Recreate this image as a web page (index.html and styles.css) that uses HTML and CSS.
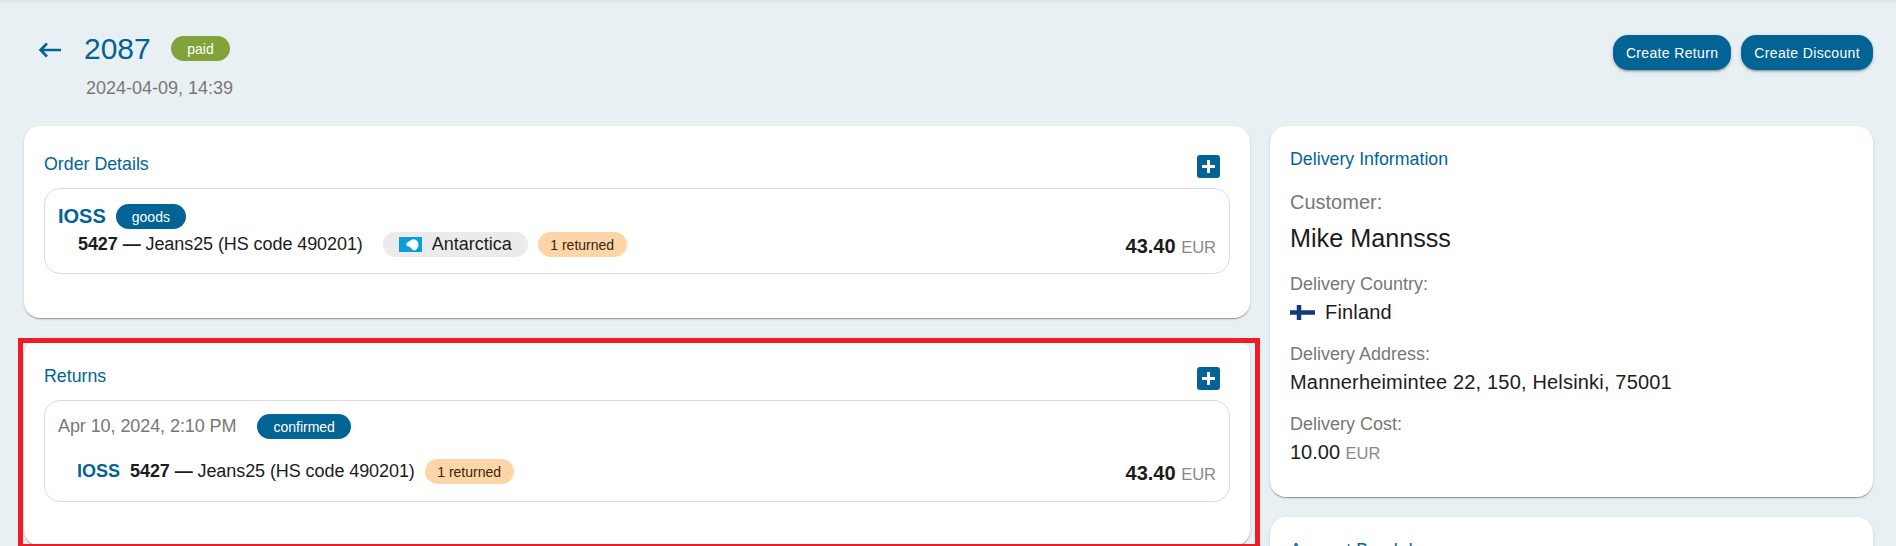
FILE: index.html
```html
<!DOCTYPE html>
<html lang="en">
<head>
<meta charset="utf-8">
<title>Order 2087</title>
<link rel="stylesheet" href="styles.css">
</head>
<body>
<div class="page">
  <header class="page-head">
    <div class="head-left">
      <div class="head-title">
        <svg class="back" width="23" height="16" viewBox="0 0 23 16"><path d="M23 8H2.500M9 1.500 2.500 8 9 14.500" fill="none" stroke="#026395" stroke-width="2.600"/></svg>
        <h1 class="order-no">2087</h1>
        <span class="chip chip-paid">paid</span>
      </div>
      <div class="order-date">2024-04-09, 14:39</div>
    </div>
    <div class="head-actions">
      <button class="btn">Create Return</button>
      <button class="btn">Create Discount</button>
    </div>
  </header>
  <div class="layout">
    <div class="col">
      <section class="card">
        <div class="card-head">
          <h2 class="card-title">Order Details</h2>
          <span class="plus"><svg width="13" height="13" viewBox="0 0 13 13"><path d="M6.500 0v13M0 6.500h13" stroke="#fff" stroke-width="3"/></svg></span>
        </div>
        <div class="item">
          <div class="item-main">
            <div class="item-top">
              <span class="scheme">IOSS</span>
              <span class="chip chip-blue">goods</span>
            </div>
            <div class="item-line">
              <span class="product"><b>5427 —</b> Jeans25 (HS code 490201)</span>
              <span class="chip chip-country">
                <svg class="flag-aq" width="23" height="15" viewBox="0 0 23 15"><rect width="23" height="15" fill="#0a9fdc"/><path d="M7.500 6.500C9 4.500 11 4 12.500 2.800 14.500 1.500 17 2.500 18.500 4.500 20 6.500 19.500 9 18.500 11 17.500 13 15.500 14 14 13 12.500 12 12 10.500 10.500 10 9 9.500 6.500 9 7.500 6.500Z" fill="#fff"/></svg>
                Antarctica
              </span>
              <span class="chip chip-returned">1 returned</span>
            </div>
          </div>
          <div class="amount"><b>43.40</b> <span class="currency">EUR</span></div>
        </div>
      </section>
      <section class="card card-returns">
        <div class="card-head">
          <h2 class="card-title">Returns</h2>
          <span class="plus"><svg width="13" height="13" viewBox="0 0 13 13"><path d="M6.500 0v13M0 6.500h13" stroke="#fff" stroke-width="3"/></svg></span>
        </div>
        <div class="item item-return">
          <div class="item-main">
            <div class="item-top">
              <span class="return-date">Apr 10, 2024, 2:10 PM</span>
              <span class="chip chip-blue">confirmed</span>
            </div>
            <div class="item-line item-line-return">
              <span class="scheme-small">IOSS</span>
              <span class="product"><b>5427 —</b> Jeans25 (HS code 490201)</span>
              <span class="chip chip-returned">1 returned</span>
            </div>
          </div>
          <div class="amount"><b>43.40</b> <span class="currency">EUR</span></div>
        </div>
        <div class="highlight"></div>
      </section>
    </div>
    <aside class="col">
      <section class="card card-info">
        <h2 class="card-title">Delivery Information</h2>
        <div class="label label-lg">Customer:</div>
        <div class="name">Mike Mannsss</div>
        <div class="label">Delivery Country:</div>
        <div class="value value-flag">
          <svg class="flag-fi" width="25" height="15" viewBox="0 0 25 15"><rect width="25" height="15" fill="#fff"/><path d="M0 7.500h25M9 0v15" stroke="#123a78" stroke-width="4.500"/></svg>
          Finland
        </div>
        <div class="label">Delivery Address:</div>
        <div class="value value-text">Mannerheimintee 22, 150, Helsinki, 75001</div>
        <div class="label">Delivery Cost:</div>
        <div class="value">10.00 <span class="currency">EUR</span></div>
      </section>
      <section class="card card-info">
        <h2 class="card-title">Amount Breakdown</h2>
      </section>
    </aside>
  </div>
</div>
</body>
</html>
```
FILE: styles.css
```css
* { box-sizing: border-box; }
html, body { margin: 0; height: 100%; overflow: hidden; }
body {
  background: #e9f0f4;
  font-family: "Liberation Sans", Arial, sans-serif;
  color: #1c1c1c;
}
.page {
  height: 546px;
  overflow: hidden;
  box-shadow: inset 0 3px 3px -1px rgba(0, 0, 0, .05);
}
.page-head {
  display: flex;
  justify-content: space-between;
  height: 126px;
  padding: 35px 23px 0 38px;
}
.head-title { display: flex; align-items: center; height: 27px; }
.back { margin-top: 2px; margin-right: 23px; flex: none; }
.order-no {
  margin: 0 20px 0 0;
  font-size: 30px;
  font-weight: 400;
  line-height: 30px;
  color: #026395;
}
.order-date {
  margin-top: 15px;
  margin-left: 48px;
  font-size: 18px;
  line-height: 22px;
  color: #777;
}
.head-actions { display: flex; gap: 10px; }
.btn {
  height: 35px;
  padding: 0 13px;
  border: 0;
  border-radius: 15px;
  background: #026395;
  color: #fff;
  font: 14px "Liberation Sans", Arial, sans-serif;
  letter-spacing: .35px;
  box-shadow: 0 3px 1px -2px rgba(0,0,0,.2), 0 2px 2px 0 rgba(0,0,0,.14), 0 1px 5px 0 rgba(0,0,0,.12);
}
.chip {
  display: inline-flex;
  align-items: center;
  height: 25px;
  padding: 0 16px;
  border-radius: 13px;
  font-size: 14px;
  white-space: nowrap;
}
.chip-paid { padding: 0 16.5px; background: #82a23a; color: #fff; }
.chip-blue { background: #026395; color: #fff; }
.chip-country {
  margin-right: 10px;
  padding: 0 16px;
  background: #ebebeb;
  font-size: 18px;
}
.flag-aq { margin-right: 10px; }
.chip-returned { padding: 0 12.5px; background: #fdd5a6; color: #3a2412; }
.layout {
  display: grid;
  grid-template-columns: 2fr 1fr;
  padding: 0 13px 0 14px;
}
.col { padding: 0 10px; }
.card {
  position: relative;
  margin-bottom: 20px;
  border-radius: 16px;
  background: #fff;
  box-shadow: 0 2px 1px -1px rgba(0,0,0,.2), 0 1px 1px 0 rgba(0,0,0,.14), 0 1px 3px 0 rgba(0,0,0,.12);
}
.card:not(.card-info) { padding: 20px 20px 44px; }
.card-head {
  display: flex;
  justify-content: space-between;
  height: 42px;
  padding: 9px 10px 0 0;
}
.card-title {
  margin: 0;
  font-size: 17.8px;
  font-weight: 400;
  line-height: 20px;
  color: #026395;
}
.card-head .card-title { margin-top: -1px; }
.plus {
  display: flex;
  align-items: center;
  justify-content: center;
  width: 23px;
  height: 23px;
  border-radius: 3px;
  background: #026395;
}
.item {
  display: flex;
  justify-content: space-between;
  align-items: flex-end;
  padding: 15px 13px 16px;
  border: 1px solid #ddd;
  border-radius: 16px;
}
.item-return { padding: 13px 13px 17px; }
.item-top { display: flex; align-items: center; }
.item-line {
  display: flex;
  align-items: center;
  margin-top: 3px;
  padding-left: 20px;
  font-size: 18px;
}
.item-line-return { margin-top: 20px; padding-left: 19px; }
.scheme {
  margin-right: 10px;
  font-size: 20px;
  font-weight: 700;
  color: #026395;
}
.scheme-small {
  margin-right: 10px;
  font-weight: 700;
  color: #026395;
}
.product { margin-right: 20px; letter-spacing: -.08px; }
.item-line-return .product { margin-right: 10px; }
.return-date {
  margin-right: 21px;
  font-size: 18px;
  letter-spacing: -.08px;
  color: #777;
}
.amount { font-size: 20px; line-height: 19px; white-space: nowrap; }
.currency { font-size: 16.5px; color: #888; }
.card-info { padding: 23px 20px 32px; }
.label {
  margin-top: 19px;
  font-size: 18px;
  line-height: 22px;
  color: #777;
}
.label-lg { margin-top: 21px; font-size: 20px; line-height: 24px; }
.name { margin-top: 9px; margin-bottom: 20px; font-size: 25.2px; line-height: 30px; }
.name + .label { margin-top: 0; }
.value { margin-top: 5px; font-size: 20px; line-height: 24px; }
.value-flag { display: flex; align-items: center; letter-spacing: .18px; }
.value-text { letter-spacing: .18px; }
.flag-fi { margin-right: 10px; }
.highlight {
  position: absolute;
  top: 0;
  right: -10px;
  bottom: -3px;
  left: -6px;
  border: 5px solid #ee1c25;
  pointer-events: none;
}
```
